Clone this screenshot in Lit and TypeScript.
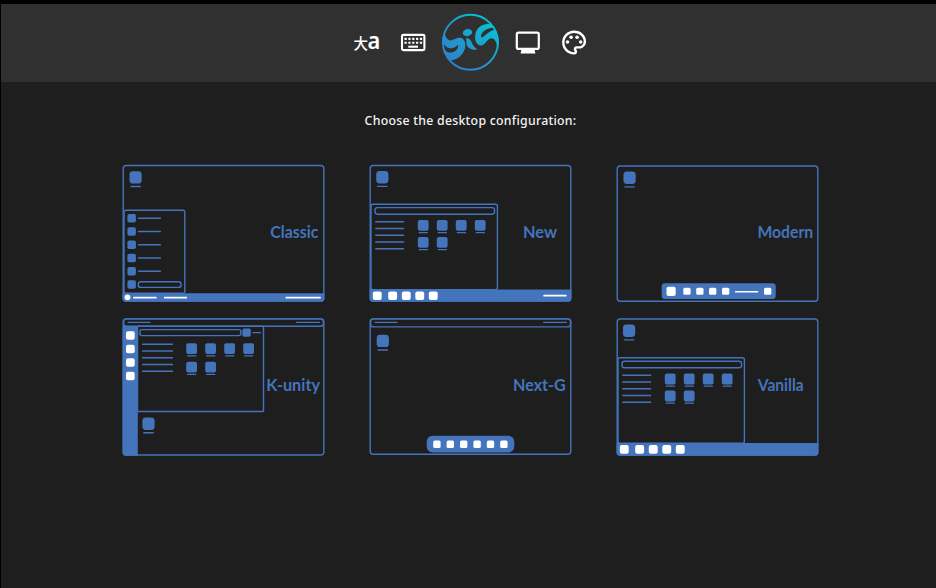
import { LitElement, html, svg, css } from "lit";
import { customElement } from "lit/decorators.js";

const box = (x: number, y: number, w: number, h: number, r = 2) =>
  svg`<rect class="line" x=${x} y=${y} width=${w} height=${h} rx=${r}></rect>`;
const fill = (x: number, y: number, w: number, h: number, r = 2) =>
  svg`<rect class="fill" x=${x} y=${y} width=${w} height=${h} rx=${r}></rect>`;
const white = (x: number, y: number, w: number, h: number, r = 2) =>
  svg`<rect class="white" x=${x} y=${y} width=${w} height=${h} rx=${r}></rect>`;
const frame = (y = 7.5, h = 135.5) => box(7.2, y, 200.6, h, 3);
const shortcut = (x: number, y: number) =>
  svg`${fill(x, y, 12.2, 12.4, 3.4)}${fill(x + 0.8, y + 14.6, 10.6, 1.4, 0.6)}`;
const label = (text: string, x: number, y: number, w: number) =>
  svg`<text class="label" x=${x} y=${y} textLength=${w} lengthAdjust="spacingAndGlyphs">${text}</text>`;

const appGrid = (x: number, y: number, row: number) =>
  [0, 1, 2, 3, 4, 5].map((i) => {
    const gx = x + (i % 4) * 19;
    const gy = y + (i > 3 ? row : 0);
    return svg`${fill(gx, gy, 10.8, 10.8, 2)}${fill(gx + 0.8, gy + 12, 9.4, 1.2, 0.5)}`;
  });
const menuLines = (x: number, y: number, w: number) =>
  [0, 1, 2, 3, 4].map((i) => fill(x, y + i * 6.75, w, 1.4, 0.5));
const launcher = (dy: number) => svg`
  ${box(8, 46.2 + dy, 126.4, 85.5)}
  ${box(12, 49.6 + dy, 119.6, 6.6, 2.6)}
  ${menuLines(12.2, 63 + dy, 29)}
  ${appGrid(54.8, 62 + dy, 17)}
  <path class="fill" d=${`M6.6 ${131.4 + dy}H208.4V140.8Q208.4 143.7 205.4 143.7H9.6Q6.6 143.7 6.6 140.8Z`}></path>
  ${[9.8, 25.2, 38.8, 52.3, 65.8].map((x) => white(x, 133.4 + dy, 8.9, 8.7, 2))}`;
const topBar = (bottom = 8) => svg`
  ${box(7.6, 6.9, 199.9, bottom, 3)}
  ${fill(11.5, 9.8, 23, 1.3, 0.5)}${fill(180, 9.8, 24, 1.3, 0.5)}`;

const layouts = [
  {
    name: "Classic",
    art: svg`${frame()}${shortcut(13.5, 13.2)}
      ${box(8, 52.3, 60.8, 83)}
      ${[0, 1, 2, 3, 4, 5].map((i) => fill(11.4, 56 + i * 13.25, 8.5, 8.6, 1.8))}
      ${[0, 1, 2, 3, 4].map((i) => fill(22, 59.6 + i * 13.25, 23, 1.4, 0.5))}
      ${box(22.3, 123.7, 42.8, 5.7, 2.5)}
      <path class="fill" d="M6.6 135.2H208.4V140.8Q208.4 143.7 205.4 143.7H9.6Q6.6 143.7 6.6 140.8Z"></path>
      <circle class="white" cx="11.5" cy="139.3" r="2.9"></circle>
      ${white(17.2, 138.7, 23.4, 1.7, 0.5)}${white(48, 138.7, 23, 1.7, 0.5)}${white(169.5, 138.7, 35.3, 1.7, 0.5)}
      ${label("Classic", 154.2, 79.5, 48.2)}`,
  },
  {
    name: "New",
    art: svg`${frame()}${shortcut(13.2, 13.1)}${launcher(0)}
      ${white(180.3, 136.8, 23.3, 1.6, 0.5)}${label("New", 160, 79.5, 34)}`,
  },
  {
    name: "Modern",
    art: svg`${frame(8, 135.2)}${shortcut(13.5, 13.6)}
      ${fill(51.7, 125.3, 114, 15.8, 3)}
      ${white(56.5, 128.7, 9.2, 9.3, 2)}
      ${[73.3, 86.2, 99, 112].map((x) => white(x, 129.7, 7.3, 7.1, 1.5))}
      ${white(125, 133, 23.2, 1.4, 0.5)}${white(154, 129.7, 7.3, 7.1, 1.5)}
      ${label("Modern", 147.4, 80.3, 55.8)}`,
  },
  {
    name: "K-unity",
    art: svg`${frame(6.9, 136.1)}${topBar(7.4)}
      <path class="fill" d="M6.7 14H21.8V143.7H9.7Q6.7 143.7 6.7 140.8Z"></path>
      ${[19.2, 32.8, 46.2, 59.8].map((y) => white(10, y, 8.7, 8.5, 2))}
      ${box(21.5, 14.3, 126, 85.2, 0.8)}
      ${box(23.9, 17.6, 101, 6, 2)}${fill(126.4, 16.5, 8.4, 8.2, 1.8)}${fill(136.5, 20, 8.6, 1.3, 0.5)}
      ${menuLines(26, 31.6, 31)}
      ${appGrid(70.2, 31.3, 18.4)}
      ${shortcut(26.4, 105.5)}
      ${label("K-unity", 150.2, 79.1, 53.8)}`,
  },
  {
    name: "Next-G",
    art: svg`${frame(6.9, 135.4)}${topBar()}${shortcut(13.7, 22.7)}
      ${fill(63.7, 123.8, 87.6, 16.8, 6)}
      ${[70.2, 83.6, 97, 110.4, 123.8, 137.2].map((x) => white(x, 128.5, 7.4, 7.4, 1.5))}
      ${label("Next-G", 150, 79.1, 52.8)}`,
  },
  {
    name: "Vanilla",
    art: svg`${frame(7, 136)}${shortcut(13, 12.6)}${launcher(-0.4)}
      ${label("Vanilla", 147.8, 79.1, 45.9)}`,
  },
];

@customElement("app-root")
export class AppRoot extends LitElement {
  static styles = css`
    :host {
      display: flex;
      flex-direction: column;
      box-sizing: border-box;
      height: 588px;
      background: #1e1e1e;
      border-top: 4px solid #000;
      border-left: 1px solid #000;
      overflow: hidden;
    }
    .bar {
      display: flex;
      justify-content: center;
      align-items: center;
      height: 78px;
      flex: none;
      background: #303030;
    }
    .bar svg {
      width: 260px;
      height: 78px;
      margin-left: 3px;
    }
    .lang-cjk {
      font: 500 14.5px "Noto Sans CJK SC", sans-serif;
      fill: #fff;
    }
    .lang-latin {
      font: 600 23px "Noto Sans", sans-serif;
      fill: #fff;
    }
    h1 {
      margin: 28px 0 0;
      padding: 1px 0 0 4px;
      text-align: center;
      font: 500 12.3px/19px "Noto Sans", sans-serif;
      letter-spacing: 0.27px;
      color: #f4f4f4;
    }
    .grid {
      display: grid;
      grid-template-columns: repeat(3, 216px);
      gap: 4px 31px;
      margin: 28px 0 0 115px;
    }
    .layout {
      display: block;
      width: 216px;
      height: 150px;
    }
    .line {
      fill: none;
      stroke: #4474bc;
      stroke-width: 1.4;
    }
    .fill {
      fill: #4474bc;
    }
    .white {
      fill: #fff;
    }
    .label {
      font: 700 16.8px Lato, sans-serif;
      fill: #4474bc;
    }
  `;

  render() {
    return html`
      <header class="bar">
        <svg viewBox="340 4 260 78">
          <defs>
            <linearGradient id="tide" gradientUnits="userSpaceOnUse" x1="450" y1="64" x2="488" y2="22">
              <stop offset="0" stop-color="#2f80cb"></stop>
              <stop offset="0.45" stop-color="#2099cd"></stop>
              <stop offset="1" stop-color="#06c0d2"></stop>
            </linearGradient>
          </defs>
          <text class="lang-cjk" x="353.4" y="48.5">大</text>
          <text class="lang-latin" x="367.6" y="49" textLength="12.8" lengthAdjust="spacingAndGlyphs">a</text>
          <rect x="402" y="34.9" width="22.4" height="15.2" rx="1.4" fill="none" stroke="#fff" stroke-width="2.1"></rect>
          <path d="M404.5 38.9h17.6M404.5 42.8h17.6" stroke="#fff" stroke-width="2.1" stroke-dasharray="2.2 1.65"></path>
          <path d="M408.3 46.7h9.7" stroke="#fff" stroke-width="2.1"></path>
          <g fill="url(#tide)">
            <circle cx="470.4" cy="42.3" r="27.5" fill="none" stroke="url(#tide)" stroke-width="1.9"></circle>
            <path d="M444.3 31C445 36.5 447.5 40.8 450.5 40.4C454 40 456.5 37.6 460 37.8C464.3 38.2 466 43 465.2 47.5C463.5 55 457 60.2 450.5 60.4C446.5 58.5 443 51.5 442.7 46.5C444.6 50.8 447.8 53.2 451.6 52.6C456 51.8 459 48 457.8 44.8C456 47.2 453 48.9 449.6 48.3C445 47.3 442.3 42.5 442.6 39Z"></path>
            <ellipse cx="467.5" cy="32.6" rx="4.7" ry="3.5" transform="rotate(-12 467.5 32.6)"></ellipse>
            <path d="M466.3 37.7C470.8 38.6 471.8 42.6 473 45C474.4 47.6 476 48.5 477.4 49.3C473.5 50.8 468.4 48.9 466.8 45.2C465.9 43 466.7 40.2 466.3 37.7Z"></path>
            <path d="M491.5 24.4C483 22.8 477 27.4 475.5 33.5C474.2 39.3 475.8 44.6 480.4 45.4C485 46 486.2 39.4 490.6 38.4C494.8 37.6 496.8 42.5 498 49.3C499.6 41.5 498.5 34.5 495.6 29.8C491 29.6 487.3 33.8 483.4 36.7C481.4 38.1 480.2 36.6 481.4 34.2C483.5 30.2 488.5 27.3 494.2 28Z"></path>
          </g>
          <rect x="516.8" y="32.7" width="22" height="16.2" rx="1.7" fill="none" stroke="#fff" stroke-width="2.2"></rect>
          <path d="M521.5 49h13l.9 4.4h-14.8z" fill="#fff"></path>
          <g transform="translate(559.7 28.2) scale(1.2)" fill="#fff">
            <path d="M12 22C6.49 22 2 17.51 2 12S6.49 2 12 2s10 4.04 10 9c0 3.31-2.69 6-6 6h-1.77c-.28 0-.5.22-.5.5 0 .12.05.23.13.33.41.47.64 1.06.64 1.67A2.5 2.5 0 0 1 12 22zm0-18c-4.41 0-8 3.59-8 8s3.59 8 8 8c.28 0 .5-.22.5-.5a.54.54 0 0 0-.14-.35c-.41-.46-.63-1.05-.63-1.65a2.5 2.5 0 0 1 2.5-2.5H16c2.21 0 4-1.79 4-4 0-3.86-3.59-7-8-7z"></path>
            <circle cx="6.5" cy="11.5" r="1.5"></circle>
            <circle cx="9.5" cy="7.5" r="1.5"></circle>
            <circle cx="14.5" cy="7.5" r="1.5"></circle>
            <circle cx="17.5" cy="11.5" r="1.5"></circle>
          </g>
        </svg>
      </header>
      <h1>Choose the desktop configuration:</h1>
      <main class="grid">
        ${layouts.map((l) => html`<svg class="layout" viewBox="0 0 216 150">${l.art}</svg>`)}
      </main>
    `;
  }
}
